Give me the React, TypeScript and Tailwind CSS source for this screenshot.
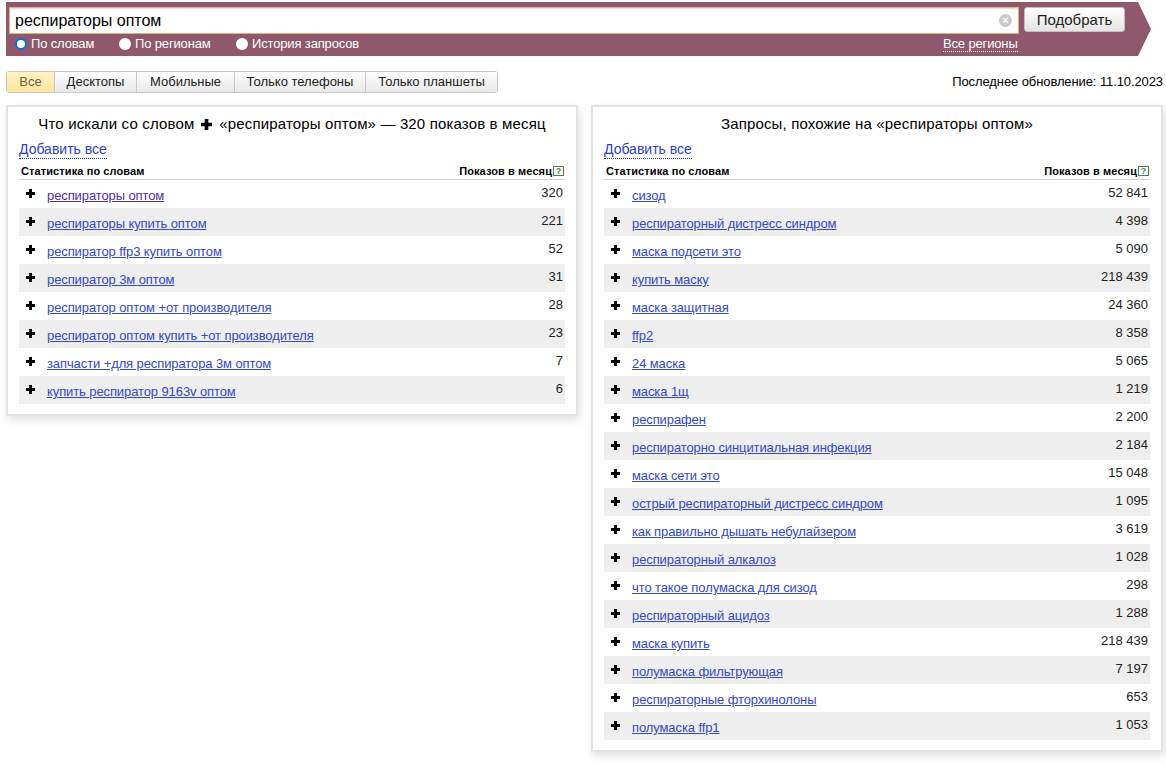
import React from 'react';

const leftRows: [string, string, boolean?][] = [
  ['респираторы оптом', '320', true],
  ['респираторы купить оптом', '221'],
  ['респиратор ffp3 купить оптом', '52'],
  ['респиратор 3м оптом', '31'],
  ['респиратор оптом +от производителя', '28'],
  ['респиратор оптом купить +от производителя', '23'],
  ['запчасти +для респиратора 3м оптом', '7'],
  ['купить респиратор 9163v оптом', '6'],
];

const rightRows: [string, string][] = [
  ['сизод', '52 841'],
  ['респираторный дистресс синдром', '4 398'],
  ['маска подсети это', '5 090'],
  ['купить маску', '218 439'],
  ['маска защитная', '24 360'],
  ['ffp2', '8 358'],
  ['24 маска', '5 065'],
  ['маска 1щ', '1 219'],
  ['респирафен', '2 200'],
  ['респираторно синцитиальная инфекция', '2 184'],
  ['маска сети это', '15 048'],
  ['острый респираторный дистресс синдром', '1 095'],
  ['как правильно дышать небулайзером', '3 619'],
  ['респираторный алкалоз', '1 028'],
  ['что такое полумаска для сизод', '298'],
  ['респираторный ацидоз', '1 288'],
  ['маска купить', '218 439'],
  ['полумаска фильтрующая', '7 197'],
  ['респираторные фторхинолоны', '653'],
  ['полумаска ffp1', '1 053'],
];

const tabs: [string, string][] = [
  ['Десктопы', 'w-[82px]'],
  ['Мобильные', 'w-[98px]'],
  ['Только телефоны', 'w-[131px]'],
  ['Только планшеты', 'w-[132px]'],
];

const Plus = ({ size = 9 }: { size?: number }) => (
  <svg width={size} height={size} viewBox="0 0 9 9" className="block shrink-0">
    <path d="M3 0h3v3h3v3H6v3H3V6H0V3h3z" fill="#000" />
  </svg>
);

const Radio = ({ label, checked, className }: { label: string; checked?: boolean; className: string }) => (
  <span className={`flex items-center gap-[4px] ${className}`}>
    {checked ? (
      <span className="w-[12px] h-[12px] rounded-full bg-white border-[2px] border-[#0b6fe0]" />
    ) : (
      <span className="w-[12px] h-[12px] rounded-full bg-white" />
    )}
    <span className="text-[13px] tracking-[-0.15px] text-white">{label}</span>
  </span>
);

const Panel = ({
  title,
  rows,
  className,
}: {
  title: React.ReactNode;
  rows: [string, string, boolean?][];
  className: string;
}) => (
  <section className={`w-[572px] bg-white border-2 border-[#e3e3e3] shadow-[2px_4px_8px_rgba(0,0,0,0.12)] pt-[5px] px-[11px] pb-[10px] ${className}`}>
    <div className="h-[24px] flex items-center justify-center text-[15px] tracking-[0.15px] text-black">{title}</div>
    <div className="h-[23px] flex items-end">
      <span className="text-[14px] leading-[17px] text-[#2f40c8] border-b border-dotted border-[#2f40c8]">Добавить все</span>
    </div>
    <div className="h-[21px] pt-[4px] flex items-center justify-between border-b border-[#d5d2dc] pl-[2px] pr-[1px] text-[11px] font-bold text-black tracking-[0.1px]">
      <span>Статистика по словам</span>
      <span className="flex items-center gap-[1px]">
        Показов в месяц
        <span className="w-[11px] h-[10px] border border-[#4f7f4f] text-[#4f7f4f] text-[9px] leading-[8px] text-center">?</span>
      </span>
    </div>
    {rows.map(([text, count, visited], i) => (
      <div key={text} className={`h-[28px] flex ${i % 2 === 1 ? 'bg-[#eeeeee]' : ''}`}>
        <span className="w-[28px] pl-[7px] pt-[9px] shrink-0">
          <Plus />
        </span>
        <a
          href="#"
          className={`text-[13px] leading-[16px] tracking-[-0.1px] mt-[8px] h-[16px] underline ${visited ? 'text-[#50309f]' : 'text-[#3349c4]'}`}
        >
          {text}
        </a>
        <span className="ml-auto pr-[2px] pt-[5px] text-[13px] leading-[16px] text-[#222]">{count}</span>
      </div>
    ))}
  </section>
);

const App = () => {
  return (
    <div className="w-[1166px] h-[779px] bg-white overflow-hidden font-['Liberation_Sans',Arial,sans-serif]">
      <div className="pt-[2px] pl-[6px]">
        <div className="w-[1145px] h-[54px] bg-[#8f586c] [clip-path:polygon(0_0,1132px_0,100%_50%,1132px_100%,0_100%)] pt-[5px] pl-[3px]">
          <div className="flex items-start">
            <div className="w-[1010px] h-[27px] bg-white border border-[#d6b77c] shadow-[inset_0_1px_2px_rgba(0,0,0,0.15)] flex items-center justify-between pl-[5px] pr-[6px]">
              <span className="text-[16px] text-black">респираторы оптом</span>
              <span className="w-[13px] h-[13px] rounded-full bg-[#c9c9c9] text-white text-[11px] leading-[12px] font-bold text-center">×</span>
            </div>
            <button className="ml-[5px] w-[101px] h-[25px] rounded-[3px] bg-gradient-to-b from-white to-[#e4e4e4] border border-[#c4c0c2] text-[15px] text-[#222] leading-none">
              Подобрать
            </button>
          </div>
          <div className="flex items-center h-[20px] text-white">
            <Radio label="По словам" checked className="ml-[6px] w-[104px]" />
            <Radio label="По регионам" className="w-[117px]" />
            <Radio label="История запросов" className="w-[240px]" />
            <span className="ml-[467px] text-[13px] leading-[15px] tracking-[-0.15px] border-b border-dotted border-white">Все регионы</span>
          </div>
        </div>
      </div>

      <div className="flex items-center justify-between h-[22px] mt-[15px] pl-[6px] pr-[3px]">
        <div className="flex h-[22px] text-[13px] text-[#222] rounded-[3px] border border-[#c9c7c7] overflow-hidden">
          <span className="w-[47px] flex items-center justify-center bg-gradient-to-b from-[#fff3c4] to-[#fbe49b] text-[#6b6246]">Все</span>
          {tabs.map(([t, w]) => (
            <span key={t} className={`${w} flex items-center justify-center border-l border-[#c9c7c7] bg-gradient-to-b from-white to-[#e8e8e8]`}>
              {t}
            </span>
          ))}
        </div>
        <span className="text-[13px] tracking-[-0.1px] text-black">Последнее обновление: 11.10.2023</span>
      </div>

      <div className="flex items-start mt-[12px] pl-[6px]">
        <Panel
          rows={leftRows}
          className=""
          title={
            <span className="flex items-center gap-[7px]">
              Что искали со словом
              <Plus size={11} />
              «респираторы оптом» — 320 показов в месяц
            </span>
          }
        />
        <Panel className="ml-[13px]" rows={rightRows} title="Запросы, похожие на «респираторы оптом»" />
      </div>
    </div>
  );
};

export default App;
